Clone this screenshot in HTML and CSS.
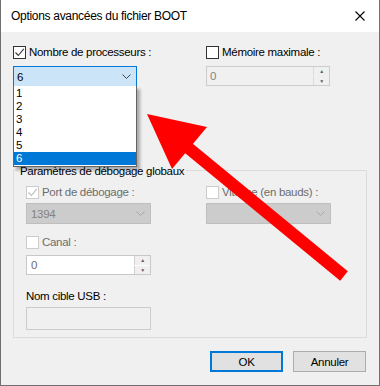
FILE: index.html
```html
<!DOCTYPE html>
<html lang="fr">
<head>
  <meta charset="UTF-8" />
  <title>Options avancées du fichier BOOT</title>
  <link rel="stylesheet" href="styles.css">
</head>
<body>
  <div class="fenetre">
    <div class="barre-titre">
      <span class="titre">Options avancées du fichier BOOT</span>
      <svg class="fermer" viewBox="0 0 10 10"><path d="M0.5 0.5 L9.5 9.5 M9.5 0.5 L0.5 9.5" stroke="#000" stroke-width="1.1"/></svg>
    </div>

    <div class="contenu">
      <div class="ligne-haut">
        <div class="colonne-gauche">
          <label class="case-ligne">
            <span class="case coche"><svg viewBox="0 0 11 11"><path d="M1.5 5.5 L4.3 8.5 L9.8 1.8" fill="none" stroke="#333" stroke-width="1.1"/></svg></span>
            <span>Nombre de processeurs :</span>
          </label>
          <div class="combo actif">
            <span>6</span>
            <svg class="chevron" viewBox="0 0 9 5"><path d="M0.5 0.5 L4.5 4.5 L8.5 0.5" fill="none" stroke="#444" stroke-width="1"/></svg>
          </div>
        </div>
        <div class="colonne-droite">
          <label class="case-ligne">
            <span class="case"></span>
            <span>Mémoire maximale :</span>
          </label>
          <div class="spin inactif">
            <span class="valeur">0</span>
            <div class="fleches">
              <span class="fleche">▲</span>
              <span class="fleche">▼</span>
            </div>
          </div>
        </div>
      </div>

      <fieldset class="groupe">
        <legend>Paramètres de débogage globaux</legend>
        <div class="groupe-interieur">
          <div class="ligne-port">
            <div class="colonne-gauche2">
              <label class="case-ligne grise">
                <span class="case inactive coche"><svg viewBox="0 0 11 11"><path d="M1.5 5.5 L4.3 8.5 L9.8 1.8" fill="none" stroke="#bcbcbc" stroke-width="1.1"/></svg></span>
                <span>Port de débogage :</span>
              </label>
              <div class="combo desactive">
                <span>1394</span>
                <svg class="chevron" viewBox="0 0 9 5"><path d="M0.5 0.5 L4.5 4.5 L8.5 0.5" fill="none" stroke="#a8a8a8" stroke-width="1"/></svg>
              </div>
            </div>
            <div class="colonne-droite2">
              <label class="case-ligne grise">
                <span class="case inactive"></span>
                <span>Vitesse (en bauds) :</span>
              </label>
              <div class="combo desactive">
                <span></span>
                <svg class="chevron" viewBox="0 0 9 5"><path d="M0.5 0.5 L4.5 4.5 L8.5 0.5" fill="none" stroke="#a8a8a8" stroke-width="1"/></svg>
              </div>
            </div>
          </div>

          <label class="case-ligne grise canal">
            <span class="case inactive"></span>
            <span>Canal :</span>
          </label>
          <div class="spin blanc">
            <span class="valeur">0</span>
            <div class="fleches">
              <span class="fleche">▲</span>
              <span class="fleche">▼</span>
            </div>
          </div>

          <div class="etiquette">Nom cible USB :</div>
          <div class="zone-texte"></div>
        </div>
      </fieldset>

      <div class="boutons">
        <button class="bouton defaut">OK</button>
        <button class="bouton">Annuler</button>
      </div>
    </div>

    <ul class="liste">
      <li>1</li>
      <li>2</li>
      <li>3</li>
      <li>4</li>
      <li>5</li>
      <li class="choisi">6</li>
    </ul>

    <svg class="grande-fleche" viewBox="0 0 380 386">
      <line x1="186" y1="146" x2="344" y2="276" stroke="#ff0000" stroke-width="12"/>
      <polygon points="147,114 207,127 172,169" fill="#ff0000"/>
    </svg>
  </div>
</body>
</html>
```

FILE: styles.css
```css
body {
  margin: 0;
  font-family: 'Liberation Sans', Arial, sans-serif;
  font-size: 11.5px;
  letter-spacing: -0.3px;
  color: #000;
}

.fenetre {
  position: relative;
  width: 380px;
  height: 386px;
  box-sizing: border-box;
  border: 1px solid #707070;
  border-top: none;
  background: #f0f0f0;
  overflow: hidden;
}

.barre-titre {
  height: 32px;
  background: #fff;
  display: flex;
  align-items: center;
  justify-content: space-between;
  padding: 0 10px 0 10px;
}

.titre {
  font-size: 12px;
  color: #000;
}

.fermer {
  width: 10px;
  height: 10px;
  margin-right: 4px;
}

.contenu {
  padding: 14px 12px 0 12px;
}

.ligne-haut {
  display: flex;
}

.colonne-gauche {
  width: 193px;
}

.case-ligne {
  display: flex;
  align-items: center;
  gap: 3px;
  height: 13px;
  line-height: 13px;
}

.case {
  width: 11px;
  height: 11px;
  border: 1px solid #333;
  background: #fff;
  display: flex;
}

.case svg {
  width: 11px;
  height: 11px;
}

.case.inactive {
  border-color: #cccccc;
}

.grise {
  color: #6d6d6d;
}

.combo {
  margin-top: 7px;
  width: 124px;
  height: 21px;
  box-sizing: border-box;
  display: flex;
  align-items: center;
  justify-content: space-between;
  padding: 0 4px 0 3px;
}

.combo.actif {
  background: #cce4f7;
  border: 1px solid #0078d7;
}

.combo.desactive {
  background: #cccccc;
  border: 1px solid #bfbfbf;
  color: #838383;
  margin-top: 4px;
  width: 125px;
  height: 21px;
  padding-left: 4px;
}

.chevron {
  width: 9px;
  height: 5px;
  margin-right: 1px;
}

.spin {
  margin-top: 7px;
  width: 124px;
  height: 20px;
  box-sizing: border-box;
  display: flex;
  justify-content: space-between;
  align-items: center;
  padding-left: 3px;
}

.spin.inactif {
  border: 1px solid #cccccc;
  background: #f0f0f0;
  color: #838383;
}

.spin.blanc {
  margin-top: 6px;
  width: 125px;
  border: 1px solid #c8c8c8;
  background: #fff;
  color: #6d6d6d;
  padding-left: 4px;
}

.fleches {
  display: flex;
  flex-direction: column;
  width: 16px;
  height: 18px;
  gap: 1px;
}

.fleche {
  flex: 1;
  background: #f0f0f0;
  border-left: 1px solid #dadada;
  font-size: 5px;
  line-height: 8px;
  text-align: center;
  color: #606060;
}

.spin.blanc .fleche {
  border-left-color: #d0d0d0;
}

.groupe {
  margin: 75px 0 0 0;
  padding: 0;
  border: 1px solid #dcdcdc;
  min-width: 0;
}

.groupe legend {
  margin-left: 4px;
  padding: 2px 2px 0 2px;
  line-height: 14px;
}

.groupe-interieur {
  padding: 8px 12px 7px 12px;
}

.ligne-port {
  display: flex;
}

.colonne-gauche2 {
  width: 180px;
}

.canal {
  margin-top: 12px;
}

.etiquette {
  margin-top: 14px;
  line-height: 14px;
}

.zone-texte {
  margin-top: 4px;
  width: 125px;
  height: 23px;
  box-sizing: border-box;
  border: 1px solid #cccccc;
  background: #f0f0f0;
}

.boutons {
  display: flex;
  justify-content: flex-end;
  gap: 10px;
  margin-top: 13px;
  padding-right: 1px;
}

.bouton {
  width: 73px;
  height: 21px;
  box-sizing: border-box;
  background: #e1e1e1;
  border: 1px solid #adadad;
  font-family: 'Liberation Sans', Arial, sans-serif;
  font-size: 11.5px;
  letter-spacing: -0.3px;
  color: #000;
  padding: 0;
}

.bouton.defaut {
  border: 2px solid #0078d7;
}

.liste {
  position: absolute;
  left: 12px;
  top: 86px;
  width: 124px;
  margin: 0;
  padding: 1px 0;
  list-style: none;
  background: #fff;
  border: 1px solid #646464;
  border-top: none;
  box-sizing: border-box;
  box-shadow: 3px 3px 3px rgba(0, 0, 0, 0.3);
}

.liste li {
  height: 13px;
  line-height: 13px;
  padding-left: 2px;
}

.liste li.choisi {
  background: #0078d7;
  color: #fff;
}

.grande-fleche {
  position: absolute;
  left: -1px;
  top: 0;
  width: 380px;
  height: 386px;
  pointer-events: none;
}
```
